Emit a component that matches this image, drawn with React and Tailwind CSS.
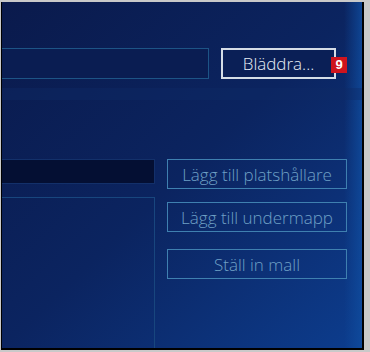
const Btn = ({ children }) => (
    <button className="h-[30px] w-[180px] border border-[#3f80b0] text-[17px] font-light text-[#6fa0c6] leading-none">
        {children}
    </button>
);

export default function App() {
    return (
        <div className="w-[370px] h-[352px] bg-[#c9c9c9] pt-[2px] pl-[1px] pr-[6px] pb-[2px] overflow-hidden" style={{ fontFamily: '"Open Sans", "Noto Sans", sans-serif' }}>
            <div className="relative h-full border-l border-r-2 border-b-2 border-black bg-gradient-to-br from-[#0a1a4c] via-[#0b2460] to-[#0c3d8e] overflow-hidden">
                <div className="absolute inset-y-0 right-0 w-[18px] bg-gradient-to-r from-transparent to-[#0f4c9e] opacity-80" />
                <div className="absolute left-0 right-0 top-[86px] h-[12px] bg-[#0e2a66] opacity-40" />

                <div className="relative flex items-start pt-[46px]">
                    <div className="h-[31px] w-[207px] border border-l-0 border-[#1d5486] bg-[#0a1d52]" />
                    <div className="relative ml-[12px]">
                        <button className="h-[31px] w-[115px] border-2 border-[#d5dde6] text-[17px] text-[#e6edf5] font-light bg-[#0a1f56] leading-none">
                            Bläddra...
                        </button>
                        <span className="absolute left-[110px] top-[9px] w-[16px] h-[16px] bg-[#cf141d] text-white text-[13px] font-bold leading-[16px] text-center" style={{ fontFamily: '"Liberation Sans", sans-serif' }}>
                            9
                        </span>
                    </div>
                </div>

                <div className="relative flex items-start mt-[80px]">
                    <div className="w-[153px] flex flex-col">
                        <div className="h-[25px] border border-l-0 border-[#13306a] bg-[#040f33]" />
                        <div className="mt-[13px] h-[160px] border border-l-0 border-b-0 border-[#18467e]" />
                    </div>
                    <div className="ml-[12px] flex flex-col gap-[13px]">
                        <Btn>Lägg till platshållare</Btn>
                        <Btn>Lägg till undermapp</Btn>
                        <div className="mt-[4px]">
                            <Btn>Ställ in mall</Btn>
                        </div>
                    </div>
                </div>
            </div>
        </div>
    );
}
